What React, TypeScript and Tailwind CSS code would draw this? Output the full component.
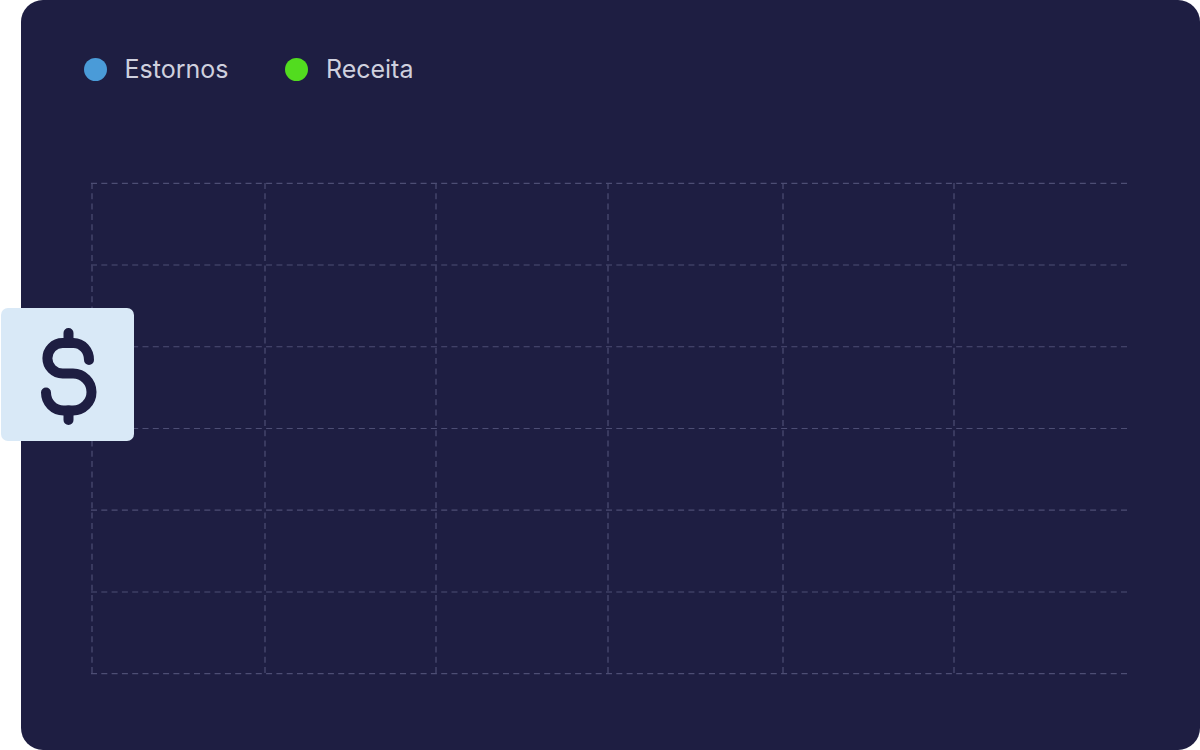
import React from 'react';

const rows = [1.3, 83, 164.75, 246.5, 328.2, 410, 491.7];
const cols = [2, 175, 346, 518, 693, 864];

const GridLines: React.FC = () => (
  <svg width="1042" height="494" viewBox="0 0 1042 494" fill="none" className="block">
    {rows.map((y) => (
      <line key={`h-${y}`} x1="1" y1={y} x2="1040" y2={y} stroke="#4d4e74" strokeWidth="1.2" strokeDasharray="6 4.3" />
    ))}
    {cols.map((x) => (
      <line key={`v-${x}`} x1={x} y1="1" x2={x} y2="492" stroke="#4d4e74" strokeWidth="1.2" strokeDasharray="6 4.3" />
    ))}
  </svg>
);

const LegendItem: React.FC<{ label: string; dot: string }> = ({ label, dot }) => (
  <div className="flex items-center gap-[17.5px]">
    <span className={`w-[23px] h-[23px] rounded-full ${dot}`} />
    <span className="text-[25px] leading-[30px] text-[#cfd0de]">{label}</span>
  </div>
);

export default function App() {
  return (
    <div className="relative w-[1200px] h-[750px] overflow-hidden bg-white pl-[21px] font-['Inter',sans-serif]">
      <div className="w-[1179px] h-[750px] rounded-[22px] bg-[#1e1e42] pt-[54px]">
        <div className="flex items-center gap-[57px] pl-[63px]">
          <LegendItem label="Estornos" dot="bg-[#4a9bd8]" />
          <LegendItem label="Receita" dot="bg-[#52dc1f]" />
        </div>
        <div className="mt-[98px] ml-[69px]">
          <GridLines />
        </div>
      </div>

      <div className="absolute left-[1px] top-[308px] w-[133px] h-[133px] rounded-[7px] bg-[#d9e9f7] flex items-center justify-center">
        <svg width="133" height="133" viewBox="1 308 133 133" fill="none" stroke="#1e1e42" strokeWidth="10" strokeLinecap="round" strokeLinejoin="round">
          <path d="M89 360 A15.5 17 0 0 0 73.5 343 H62.6 A15.2 15.25 0 0 0 62.6 373.5 H73 A18.5 18.5 0 0 1 73 410.5 H63.5 A17.5 18 0 0 1 46 392.5" />
          <path d="M68.5 333 V343 M68.5 410.5 V420" />
        </svg>
      </div>
    </div>
  );
}
